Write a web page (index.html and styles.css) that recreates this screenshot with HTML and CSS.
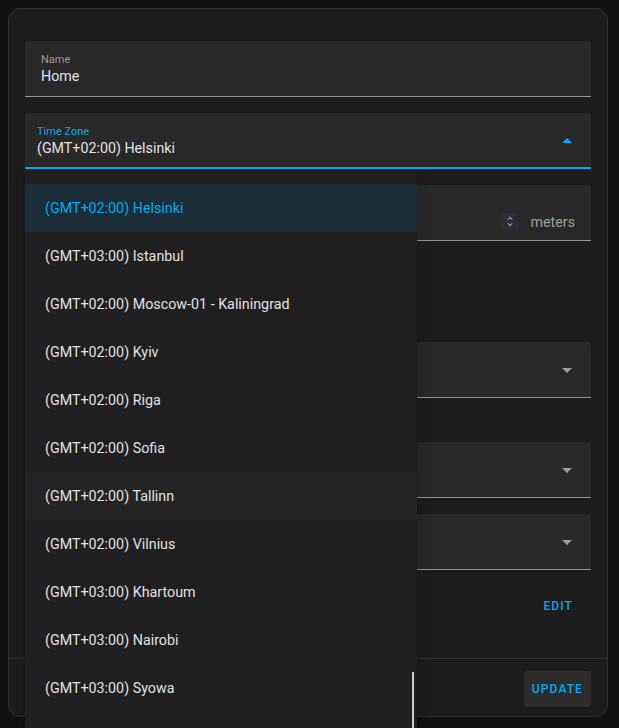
FILE: index.html
```html
<!DOCTYPE html>
<html lang="en">
<head>
<meta charset="utf-8">
<title>General settings</title>
<link rel="stylesheet" href="styles.css">
</head>
<body>
<div class="dialog">
  <div class="content">
    <div class="field">
      <div class="label">Name</div>
      <div class="value">Home</div>
    </div>

    <div class="anchor">
      <div class="field focused select">
        <div class="label">Time Zone</div>
        <div class="value">(GMT+02:00) Helsinki</div>
        <span class="arrow up"></span>
      </div>
      <div class="menu">
        <ul class="list">
          <li class="item selected">(GMT+02:00) Helsinki</li>
          <li class="item">(GMT+03:00) Istanbul</li>
          <li class="item">(GMT+02:00) Moscow-01 - Kaliningrad</li>
          <li class="item">(GMT+02:00) Kyiv</li>
          <li class="item">(GMT+02:00) Riga</li>
          <li class="item">(GMT+02:00) Sofia</li>
          <li class="item hover">(GMT+02:00) Tallinn</li>
          <li class="item">(GMT+02:00) Vilnius</li>
          <li class="item">(GMT+03:00) Khartoum</li>
          <li class="item">(GMT+03:00) Nairobi</li>
          <li class="item">(GMT+03:00) Syowa</li>
        </ul>
        <div class="thumb"></div>
      </div>
    </div>

    <div class="field suffixed">
      <div class="label">Elevation</div>
      <div class="value-row">
        <span class="value">0</span>
        <span class="suffix">
          <span class="spinner">
            <svg width="18" height="17" viewBox="0 0 18 17"><path d="M6.8 6.6 9 4.4l2.2 2.2M6.8 10.4 9 12.6l2.2-2.2" fill="none" stroke="#9a98a6" stroke-width="1.1"/></svg>
          </span>
          <span class="unit">meters</span>
        </span>
      </div>
    </div>

    <div class="units">
      <div class="units-title">Unit System</div>
      <div class="radios">
        <span class="radio">Metric</span>
        <span class="radio">US customary</span>
      </div>
    </div>

    <div class="field select">
      <div class="label">Currency</div>
      <div class="value">Euro (EUR)</div>
      <span class="arrow"></span>
    </div>
    <div class="helper">Find your value</div>

    <div class="field select">
      <div class="label">Country</div>
      <div class="value">Finland</div>
      <span class="arrow"></span>
    </div>

    <div class="field select">
      <div class="label">Language</div>
      <div class="value">English</div>
      <span class="arrow"></span>
    </div>

    <div class="location">
      <span class="loc-text">Location</span>
      <span class="text-btn">Edit</span>
    </div>
  </div>
  <div class="footer">
    <span class="btn">Update</span>
  </div>
</div>
</body>
</html>
```

FILE: styles.css
```css
* { box-sizing: border-box; }
html, body { margin: 0; padding: 0; overflow: hidden; height: 100%; }
body {
  background: #111111;
  font-family: Roboto, "Noto Sans", sans-serif;
  color: #e1e1e1;
  padding: 8px 0 0 8px;
}
.dialog {
  width: 600px;
  height: 709px;
  background: #1c1c1c;
  border: 1px solid #2e2e2e;
  border-radius: 12px;
  display: flex;
  flex-direction: column;
}
.content {
  padding: 32px 16px 0 16px;
  flex: 1;
}
.field {
  position: relative;
  height: 56px;
  background: #282828;
  border-radius: 4px 4px 0 0;
  border-bottom: 1px solid #8f8f8f;
  padding: 12px 16px 0 16px;
  margin-bottom: 16px;
}
.field.select { padding-left: 12px; }
.field.focused { border-bottom: 2px solid #03a9f4; }
.label {
  font-size: 11px;
  line-height: 14px;
  height: 14px;
  color: #9e9e9e;
}
.focused .label { color: #03a9f4; }
.value {
  font-size: 14.25px;
  line-height: 18px;
  color: #e1e1e1;
}
.arrow {
  position: absolute;
  right: 19px;
  top: 26px;
  width: 0; height: 0;
  border-left: 5px solid transparent;
  border-right: 5px solid transparent;
  border-top: 5px solid #9e9e9e;
}
.arrow.up {
  top: 25px;
  border-top: 0;
  border-bottom: 5px solid #03a9f4;
}
.anchor { position: relative; }
.menu {
  position: absolute;
  z-index: 5;
  left: 0;
  top: 56px;
  width: 392px;
  height: 560px;
  background: #1f1f1f;
  padding-top: 15px;
  overflow: hidden;
  box-shadow: 0 5px 5px -3px rgba(0,0,0,.2), 0 8px 10px 1px rgba(0,0,0,.14);
}
.list { list-style: none; margin: 0; padding: 0; }
.item {
  height: 48px;
  line-height: 48px;
  padding-left: 20px;
  font-size: 14.3px;
  color: #e1e1e1;
}
.item.selected { background: #1b2d37; color: #03a9f4; }
.item.hover { background: #242424; }
.thumb {
  position: absolute;
  left: 387px;
  top: 503px;
  width: 2px;
  height: 80px;
  background: #cfcfcf;
}
.value-row {
  display: flex;
  justify-content: space-between;
  align-items: center;
  height: 18px;
}
.suffix { display: flex; align-items: center; gap: 12px; margin-top: 3px; }
.spinner {
  width: 18px; height: 17px;
  background: #2d2b37;
  border-radius: 2px;
  display: flex;
}
.unit { font-size: 14.25px; color: #9e9e9e; }
.units {
  height: 85px;
  padding-top: 6px;
  font-size: 14px;
  width: 300px;
}
.units-title { color: #e1e1e1; margin-bottom: 12px; }
.radios { display: flex; gap: 24px; color: #e1e1e1; }
.helper {
  height: 28px;
  font-size: 12px;
  color: #03a9f4;
  padding: 4px 16px 0;
  width: 200px;
  margin-top: -16px;
  margin-bottom: 16px;
}
.location {
  display: flex;
  justify-content: space-between;
  align-items: center;
  height: 36px;
  margin-top: 18px;
}
.loc-text { font-size: 14px; }
.text-btn {
  font-size: 12px;
  font-weight: 500;
  letter-spacing: 1.1px;
  text-transform: uppercase;
  color: #03a9f4;
  padding: 0 8px;
  margin-right: 10px;
  line-height: 36px;
}
.footer {
  border-top: 1px solid #2e2e2e;
  padding: 12px 16px 9px;
  display: flex;
  justify-content: flex-end;
}
.btn {
  height: 36px;
  line-height: 36px;
  padding: 0 8px;
  background: #2c2c2c;
  border-radius: 4px;
  font-size: 12px;
  font-weight: 500;
  letter-spacing: 1.1px;
  text-transform: uppercase;
  color: #03a9f4;
}
```
